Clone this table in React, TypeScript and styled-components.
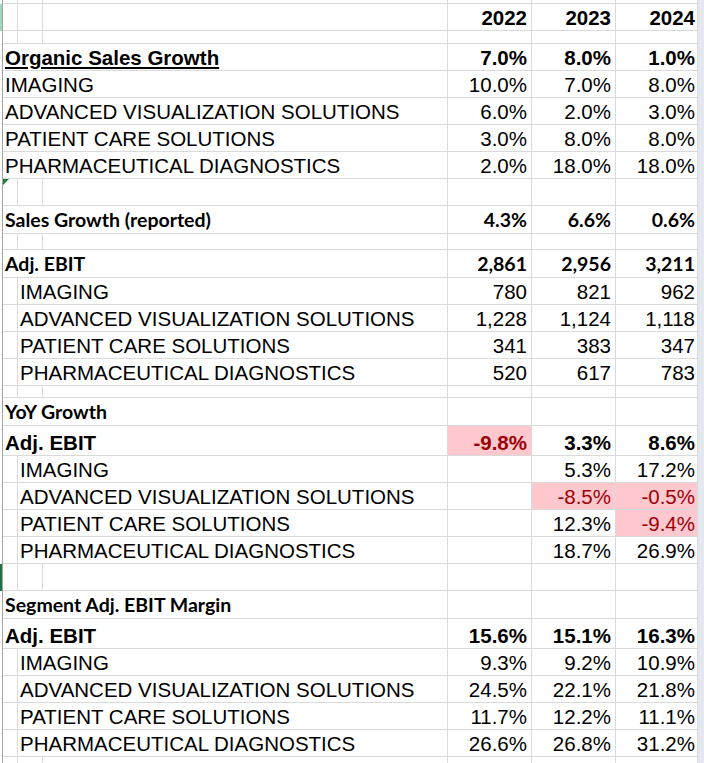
import React from "react";
import styled, { createGlobalStyle, css } from "styled-components";

const GlobalStyle = createGlobalStyle`
  html, body { margin: 0; padding: 0; background: #ffffff; overflow: hidden; }
  #root { width: 704px; height: 763px; overflow: hidden; }
`;

const GRID = "#dadada";
const COLS = "3px 15px 25px 405px 84px 84px 82px 1fr";

type FontKind = "arial" | "arialBold" | "arialBoldU" | "calibri";
type HeadKind = "none" | "sel" | "active";

const fontCss = (f: FontKind) => {
  switch (f) {
    case "arial":
      return css`
        font-family: "Liberation Sans", Arial, sans-serif;
        font-size: 20.5px;
        font-weight: 400;
        line-height: 20px;
        padding-bottom: 2px;
      `;
    case "arialBold":
      return css`
        font-family: "Liberation Sans", Arial, sans-serif;
        font-size: 20.5px;
        font-weight: 700;
        line-height: 20px;
        padding-bottom: 2px;
      `;
    case "arialBoldU":
      return css`
        font-family: "Liberation Sans", Arial, sans-serif;
        font-size: 20.5px;
        font-weight: 700;
        line-height: 20px;
        padding-bottom: 2px;
        text-decoration: underline;
        text-decoration-thickness: 2px;
        text-underline-offset: 2px;
      `;
    case "calibri":
      return css`
        font-family: Lato, "Open Sans", sans-serif;
        font-size: 19.5px;
        font-weight: 700;
        line-height: 20px;
        padding-bottom: 3px;
      `;
  }
};

const Sheet = styled.div`
  display: flex;
  flex-direction: column;
  width: 704px;
  height: 763px;
  overflow: hidden;
  color: #000000;
`;

const SheetRow = styled.div<{ $h: number }>`
  display: grid;
  grid-template-columns: ${COLS};
  height: ${(p) => p.$h}px;
  flex: none;
`;

const RowHead = styled.div<{ $kind: HeadKind }>`
  box-sizing: border-box;
  border-right: 1px solid #a3a3a3;
  background: ${(p) =>
    p.$kind === "sel" ? "#a0d9b9" : p.$kind === "active" ? "#217346" : "transparent"};
`;

const Cell = styled.div<{ $span?: string; $marker?: boolean }>`
  box-sizing: border-box;
  position: relative;
  border-right: 1px solid ${GRID};
  border-bottom: 1px solid ${GRID};
  grid-column: ${(p) => p.$span || "auto"};
  ${(p) =>
    p.$marker &&
    css`
      &::before {
        content: "";
        position: absolute;
        left: 0;
        top: 0;
        border-top: 6px solid #1e7b3a;
        border-right: 6px solid transparent;
      }
    `}
`;

const LabelCell = styled(Cell)<{ $font: FontKind }>`
  display: flex;
  align-items: flex-end;
  padding-left: 2px;
  white-space: nowrap;
  overflow: visible;
  ${(p) => fontCss(p.$font)}
`;

const ValueCell = styled(Cell)<{ $font: FontKind; $red?: boolean; $pr: number }>`
  display: flex;
  align-items: flex-end;
  justify-content: flex-end;
  padding-right: ${(p) => p.$pr}px;
  white-space: nowrap;
  ${(p) => fontCss(p.$font === "arialBoldU" ? "arialBold" : p.$font)}
  ${(p) =>
    p.$red &&
    css`
      background: #ffc7ce;
      color: #9c0006;
    `}
`;

const Strip = styled.div`
  background: #e4e9ef;
`;

type RowDef = {
  h: number;
  label?: string;
  indent?: boolean;
  font?: FontKind;
  valueFont?: FontKind;
  values?: string[];
  red?: boolean[];
  head?: HeadKind;
  marker?: boolean;
};

const SEG = [
  "IMAGING",
  "ADVANCED VISUALIZATION SOLUTIONS",
  "PATIENT CARE SOLUTIONS",
  "PHARMACEUTICAL DIAGNOSTICS",
];

const rows: RowDef[] = [
  { h: 4 },
  { h: 27, head: "sel", values: ["2022", "2023", "2024"], valueFont: "arialBold" },
  { h: 13 },
  { h: 27, label: "Organic Sales Growth", font: "arialBoldU", values: ["7.0%", "8.0%", "1.0%"], valueFont: "arialBold" },
  { h: 27, label: SEG[0], font: "arial", values: ["10.0%", "7.0%", "8.0%"] },
  { h: 27, label: SEG[1], font: "arial", values: ["6.0%", "2.0%", "3.0%"] },
  { h: 27, label: SEG[2], font: "arial", values: ["3.0%", "8.0%", "8.0%"] },
  { h: 27, label: SEG[3], font: "arial", values: ["2.0%", "18.0%", "18.0%"] },
  { h: 27, marker: true },
  { h: 28, label: "Sales Growth (reported)", font: "calibri", values: ["4.3%", "6.6%", "0.6%"], valueFont: "calibri" },
  { h: 16 },
  { h: 28, label: "Adj. EBIT", font: "calibri", values: ["2,861", "2,956", "3,211"], valueFont: "calibri" },
  { h: 27, label: SEG[0], indent: true, font: "arial", values: ["780", "821", "962"] },
  { h: 27, label: SEG[1], indent: true, font: "arial", values: ["1,228", "1,124", "1,118"] },
  { h: 27, label: SEG[2], indent: true, font: "arial", values: ["341", "383", "347"] },
  { h: 27, label: SEG[3], indent: true, font: "arial", values: ["520", "617", "783"] },
  { h: 12 },
  { h: 28, label: "YoY Growth", font: "calibri", values: ["", "", ""] },
  { h: 30, label: "Adj. EBIT", font: "arialBold", values: ["-9.8%", "3.3%", "8.6%"], valueFont: "arialBold", red: [true, false, false] },
  { h: 27, label: SEG[0], indent: true, font: "arial", values: ["", "5.3%", "17.2%"] },
  { h: 27, label: SEG[1], indent: true, font: "arial", values: ["", "-8.5%", "-0.5%"], red: [false, true, true] },
  { h: 27, label: SEG[2], indent: true, font: "arial", values: ["", "12.3%", "-9.4%"], red: [false, false, true] },
  { h: 27, label: SEG[3], indent: true, font: "arial", values: ["", "18.7%", "26.9%"] },
  { h: 27, head: "active" },
  { h: 28, label: "Segment Adj. EBIT Margin", font: "calibri", values: ["", "", ""] },
  { h: 30, label: "Adj. EBIT", font: "arialBold", values: ["15.6%", "15.1%", "16.3%"], valueFont: "arialBold" },
  { h: 27, label: SEG[0], indent: true, font: "arial", values: ["9.3%", "9.2%", "10.9%"] },
  { h: 27, label: SEG[1], indent: true, font: "arial", values: ["24.5%", "22.1%", "21.8%"] },
  { h: 27, label: SEG[2], indent: true, font: "arial", values: ["11.7%", "12.2%", "11.1%"] },
  { h: 27, label: SEG[3], indent: true, font: "arial", values: ["26.6%", "26.8%", "31.2%"] },
  { h: 27 },
];

const PAD = [4, 4, 2];

function Row({ r }: { r: RowDef }) {
  const values = r.values || ["", "", ""];
  const vf: FontKind = r.valueFont || "arial";
  return (
    <SheetRow $h={r.h}>
      <RowHead $kind={r.head || "none"} />
      {r.label === undefined ? (
        <>
          <Cell $marker={r.marker} />
          <Cell />
          <Cell />
        </>
      ) : r.indent ? (
        <>
          <Cell />
          <LabelCell $span="3 / 5" $font={r.font || "arial"}>
            {r.label}
          </LabelCell>
        </>
      ) : (
        <LabelCell $span="2 / 5" $font={r.font || "arial"}>
          <span>{r.label}</span>
        </LabelCell>
      )}
      {values.map((v, i) => (
        <ValueCell key={i} $font={vf} $pr={PAD[i]} $red={r.red?.[i]}>
          {v}
        </ValueCell>
      ))}
      <Strip />
    </SheetRow>
  );
}

export default function App() {
  return (
    <>
      <GlobalStyle />
      <Sheet>
        {rows.map((r, i) => (
          <Row key={i} r={r} />
        ))}
      </Sheet>
    </>
  );
}
